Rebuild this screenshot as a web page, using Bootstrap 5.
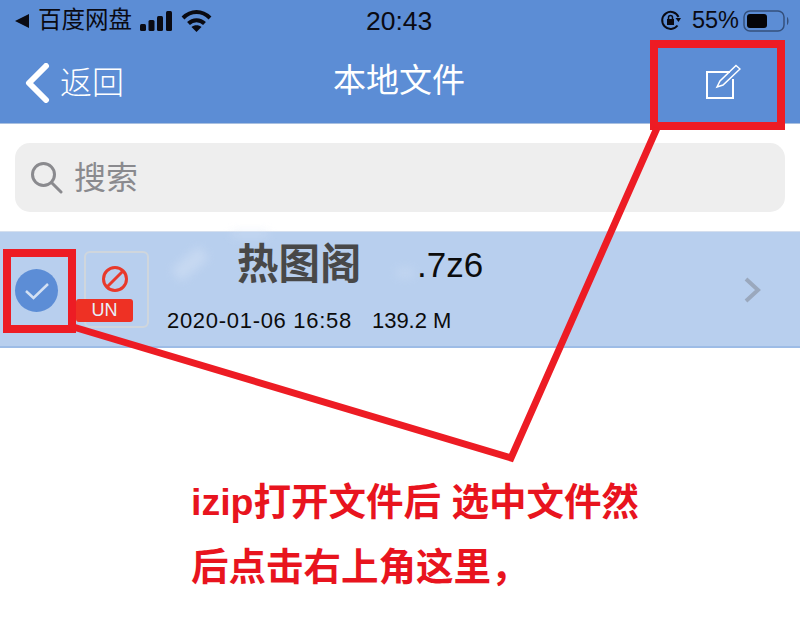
<!DOCTYPE html>
<html lang="zh">
<head>
<meta charset="UTF-8">
<title>本地文件</title>
<link href="https://cdn.jsdelivr.net/npm/bootstrap@5.3.3/dist/css/bootstrap.min.css" rel="stylesheet">
<style>
  html, body { margin: 0; background: #fff; }
  body { width: 800px; height: 623px; overflow: hidden; position: relative;
    font-family: "Liberation Sans", "Noto Sans CJK SC", sans-serif; }
  .app-head { background: #5c8dd5; height: 124px; border-bottom: 1px solid #a9c0e0; }
  .status-row { height: 42px; padding: 0 10px 0 15px; color: #0a0a12; font-size: 23.5px; position: relative; }
  .status-clock { position: absolute; left: 366px; top: 7px; font-size: 26.5px; line-height: 28px; }
  .lock-ico { margin-right: 2px; }
  .title-row { height: 81px; color: #fff; padding-left: 24px; position: relative; }
  .back-txt { font-size: 32px; margin-left: 10px; font-weight: 300; }
  .page-title { position: absolute; left: 333px; top: 17px; font-size: 33px; line-height: 44px; }
  .edit-ico { position: absolute; left: 705px; top: 21px; }
  .search-box { margin: 19px 15px 19px 15px; height: 69px; border-radius: 15px; background: #eeeeee;
    padding-left: 15px; color: #8a8a8e; font-size: 32px; }
  .search-hint { margin-left: 11px; }
  .file-row { height: 117px; background: #b8cfee; border-top: 1px solid #d5dfee; border-bottom: 2px solid #9dbce6; position: relative; }
  .tick-ball { width: 43px; height: 43px; border-radius: 50%; background: #5c8dd6; margin: 37px 0 0 15px; }
  .type-box { width: 65px; height: 77px; border: 2px solid #cfd6dd; border-radius: 6px; margin: 19px 0 0 26px; position: relative; }
  .ban-ico { margin: 12px 0 0 15px; }
  .un-tag { position: absolute; left: -10px; bottom: 4px; width: 57px; height: 23px; background: #ee3124; border-radius: 3px;
    color: #e8eef8; font-size: 18px; line-height: 23px; text-align: center; }
  .file-name { position: absolute; left: 237px; top: 10px; font-size: 41.500px; line-height: 46px; font-weight: 700; color: #484848; }
  .file-ext { position: absolute; left: 417px; top: 11px; font-size: 35px; line-height: 44px; color: #0c0c0c; }
  .file-meta { position: absolute; left: 167px; top: 76px; font-size: 22px; line-height: 26px; color: #0c0c0c; gap: 20px; white-space: nowrap; }
  .meta-stamp { letter-spacing: .7px; }
  .row-arrow { position: absolute; left: 744px; top: 45px; }
  .smear { position: absolute; background: #d9e5f6; filter: blur(5px); }
  .smear-a { left: 172px; top: 24px; width: 36px; height: 16px; transform: rotate(-40deg); opacity: .45; }
  .smear-b { left: 232px; top: 0; width: 36px; height: 4px; opacity: .7; }
  .smear-c { left: 396px; top: 36px; width: 18px; height: 10px; opacity: .3; }
  .note-block { margin: 122px 0 0 191px; color: #e8141e; font-size: 37.500px; font-weight: 700; line-height: 65px; white-space: nowrap; }
  .mark-layer { position: absolute; left: 0; top: 0; pointer-events: none; }
</style>
</head>
<body>
  <div class="app-head">
    <div class="status-row d-flex align-items-center">
      <svg width="15" height="14" viewBox="0 0 15 14"><path d="M0 7 14 0V14Z" fill="#0a0a12"/></svg>
      <span class="ms-2">百度网盘</span>
      <svg class="ms-2" width="33" height="21" viewBox="0 0 33 21" fill="#0a0a12">
        <rect x="0" y="13" width="6" height="7" rx="1.5"/><rect x="8.5" y="9" width="6" height="11" rx="1.5"/>
        <rect x="17" y="5" width="6" height="15" rx="1.5"/><rect x="26" y="0" width="6" height="20" rx="1.5"/>
      </svg>
      <svg class="ms-2" width="31" height="22" viewBox="0 0 31 22" fill="none" stroke="#0a0a12" stroke-width="4">
        <path d="M2 8C10 0 21 0 29 8"/><path d="M7.500 13.500C12 9 19 9 23.500 13.500"/>
        <path d="M15.500 22 10.500 17C13 14.500 18 14.500 20.500 17Z" fill="#0a0a12" stroke="none"/>
      </svg>
      <span class="status-clock">20:43</span>
      <svg class="lock-ico ms-auto" width="22" height="22" viewBox="0 0 22 22" fill="none" stroke="#0a0a12" stroke-width="2">
        <path d="M17.500 15.500A8.500 8.500 0 1 1 18.500 7"/><path d="M15.500 8H21L18.500 12Z" fill="#0a0a12" stroke="none"/>
        <rect x="7" y="9" width="7" height="6" fill="#0a0a12" stroke="none"/><path d="M8.500 9V7.500a2 2 0 0 1 4 0V9" stroke-width="1.500"/>
      </svg>
      <span class="ms-2">55%</span>
      <svg class="ms-1" width="47" height="24" viewBox="0 0 47 24">
        <rect x="1" y="2" width="40" height="20" rx="6" fill="none" stroke="#34507c" stroke-width="1.500"/>
        <rect x="4" y="5" width="20" height="14" rx="3" fill="#050508"/>
        <path d="M44 8c2 1 2 7 0 8Z" fill="#34507c"/>
      </svg>
    </div>
    <div class="title-row d-flex align-items-center">
      <svg width="26" height="40" viewBox="0 0 26 40" fill="none" stroke="#fff" stroke-width="6" stroke-linecap="round" stroke-linejoin="round"><path d="M22 3 5 20 22 37"/></svg>
      <span class="back-txt">返回</span>
      <span class="page-title">本地文件</span>
      <svg class="edit-ico" width="36" height="36" viewBox="0 0 36 36" fill="none" stroke="#fff" stroke-width="2">
        <path d="M25 9H2V35H28V16"/><path d="M12 24 15 18 31 2.500 35 6 18 22Z" stroke-width="1.500"/>
      </svg>
    </div>
  </div>

  <div class="search-box d-flex align-items-center">
    <svg width="33" height="33" viewBox="0 0 33 33" fill="none" stroke="#8a8a8e" stroke-width="3"><circle cx="13.500" cy="13.500" r="11"/><path d="M21.500 21.500 31 31" stroke-linecap="round"/></svg>
    <span class="search-hint">搜索</span>
  </div>

  <div class="file-row d-flex">
    <div class="tick-ball d-flex align-items-center justify-content-center">
      <svg width="26" height="20" viewBox="0 0 26 20" fill="none" stroke="#d3e0f3" stroke-width="2.500"><path d="M2 10 9.500 17 24 3"/></svg>
    </div>
    <div class="type-box">
      <svg class="ban-ico d-block" width="28" height="28" viewBox="0 0 28 28" fill="none" stroke="#e8392b" stroke-width="3"><circle cx="14" cy="14" r="11.500"/><path d="M22 6 6 22"/></svg>
      <div class="un-tag">UN</div>
    </div>
    <i class="smear smear-a"></i><i class="smear smear-b"></i><i class="smear smear-c"></i>
    <span class="file-name">热图阁</span>
    <span class="file-ext">.7z6</span>
    <span class="file-meta d-flex"><span class="meta-stamp">2020-01-06 16:58</span><span>139.2 M</span></span>
    <svg class="row-arrow" width="17" height="26" viewBox="0 0 17 26" fill="none" stroke="#9aa8bd" stroke-width="4"><path d="M2 2 14 13 2 24"/></svg>
  </div>

  <div class="note-block">izip打开文件后 选中文件然<br>后点击右上角这里，</div>

  <!-- red marks drawn on top of the screenshot -->
  <svg class="mark-layer" width="800" height="623" viewBox="0 0 800 623" fill="none" stroke="#ed1c24">
    <rect x="654" y="44" width="127" height="82" stroke-width="8"/>
    <rect x="7" y="253" width="65" height="76" stroke-width="8"/>
    <path d="M657 128 511 458 70 326" stroke-width="7"/>
  </svg>
</body>
</html>
